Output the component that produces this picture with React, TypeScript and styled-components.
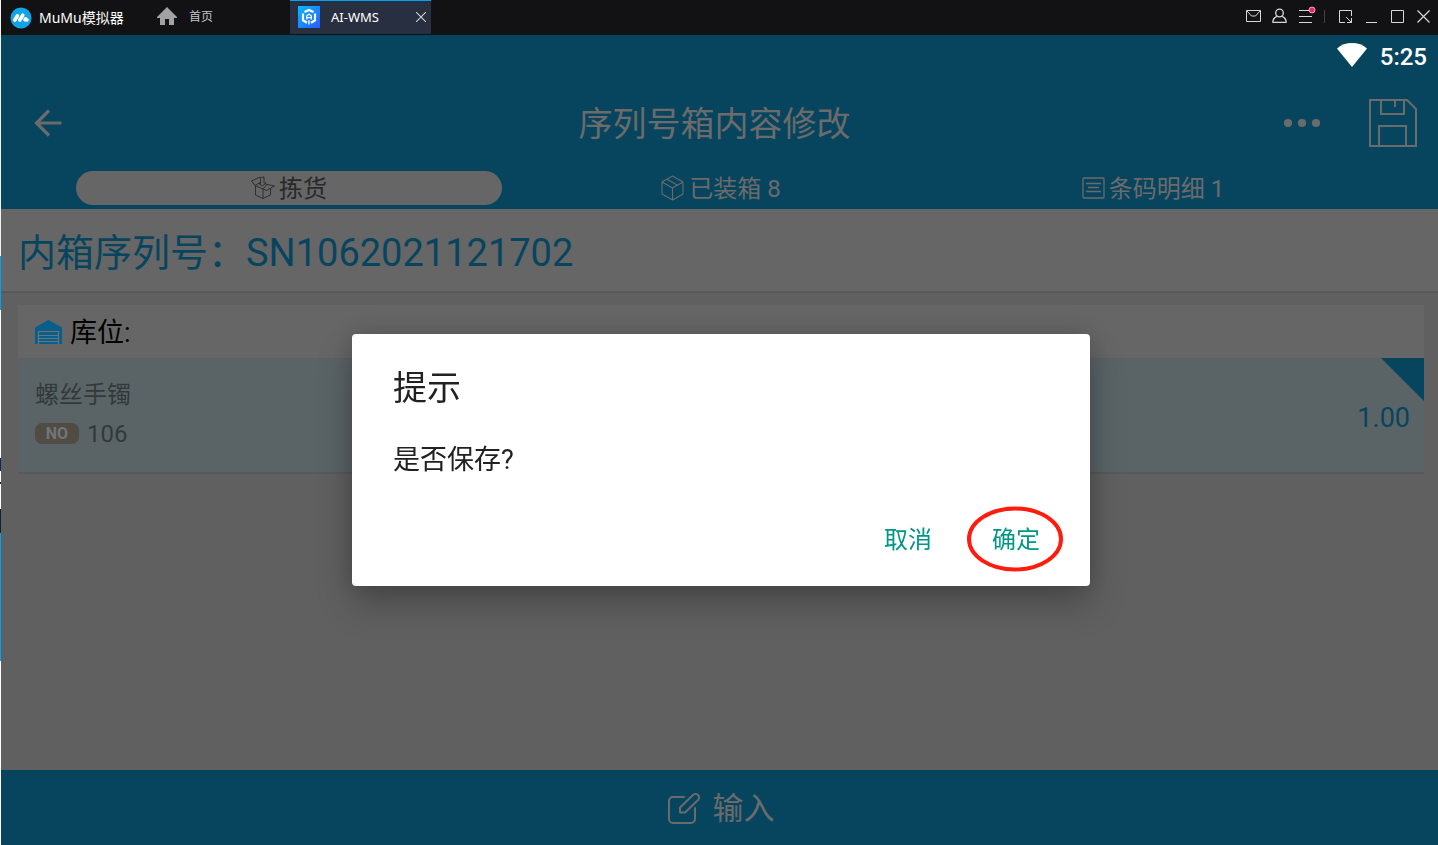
import React from "react";
import styled, { createGlobalStyle, css } from "styled-components";

const color = {
  teal: "#07455f",
  surface: "#666666",
  page: "#606060",
  muted: "#6b6b6b",
  line: "#595959",
  accent: "#009688",
  chrome: "#121214",
};

const GlobalStyle = createGlobalStyle`
  * { box-sizing: border-box; }
  html, body { margin: 0; padding: 0; }
  body {
    font-family: Roboto, "Noto Sans CJK SC", sans-serif;
    background: ${color.page};
  }
  button {
    font: inherit;
    color: inherit;
    background: none;
    border: 0;
    padding: 0;
    cursor: pointer;
  }
  h1, h2, p { margin: 0; font-weight: 400; }
  svg { display: block; flex: none; }
`;

/* The desktop behind the emulator window shows along its left edge. */
const Desktop = styled.div`
  min-height: 100vh;
  padding-left: 1px;
  display: flex;
  flex-direction: column;
  background: linear-gradient(
    to bottom,
    #f2f2f2 0 256px,
    #00a2f2 256px 310px,
    #ffffff 310px 458px,
    #0a2a5c 458px 471px,
    #ffffff 471px 482px,
    #222222 482px 484px,
    #ffffff 484px 509px,
    #14202a 509px 533px,
    #00a2f2 533px 661px,
    #ffffff 661px
  );
`;

const TitleBar = styled.header`
  height: 35px;
  display: flex;
  align-items: center;
  justify-content: space-between;
  padding: 0 6px 0 9px;
  background: ${color.chrome};
  color: #ffffff;
  font-family: "Noto Sans", "Noto Sans CJK SC", sans-serif;
`;

const TitleGroup = styled.div`
  display: flex;
  align-items: center;
  height: 100%;
`;

const Brand = styled.div`
  display: flex;
  align-items: center;
  gap: 7px;
  width: 147px;
  height: 34px;
  font-size: 14px;
  line-height: 20px;
  white-space: nowrap;
`;

const HomeButton = styled.button`
  display: flex;
  align-items: center;
  gap: 12px;
  width: 133px;
  height: 34px;
  padding-bottom: 4px;
  color: #c4c4c4;
  font-size: 12px;
`;

const AppTab = styled.div`
  display: flex;
  align-items: center;
  align-self: flex-start;
  width: 141px;
  height: 34px;
  padding: 0 5px 2px 8px;
  border-top: 1px solid #00a2f2;
  background: #282f40;
  font-size: 13px;
`;

const AppTabName = styled.span`
  flex: 1;
  padding-left: 11px;
`;

const WindowTools = styled.div`
  display: flex;
  align-items: center;
  gap: 10px;
  height: 100%;
  padding-bottom: 3px;
  color: #d8d8d8;
`;

const ToolSeparator = styled.span`
  width: 4px;
  height: 13px;
  border-left: 1px solid #444448;
`;

const StatusBar = styled.div`
  height: 43px;
  display: flex;
  align-items: center;
  justify-content: flex-end;
  gap: 13px;
  padding: 0 11px;
  background: ${color.teal};
  color: #ffffff;
  font-size: 24px;
  font-weight: 500;
  line-height: 28px;
`;

const WifiSlot = styled.span`
  padding-bottom: 3px;
`;

const AppHeader = styled.div`
  height: 89px;
  display: grid;
  grid-template-columns: 1fr auto 1fr;
  align-items: center;
  padding: 0 21px 0 11px;
  background: ${color.teal};
  color: ${color.muted};
`;

const BackButton = styled.button`
  display: flex;
  justify-content: center;
  width: 72px;
`;

const PageTitle = styled.h1`
  padding-top: 2px;
  font-size: 34px;
  line-height: 48px;
`;

const HeaderActions = styled.div`
  display: flex;
  align-items: center;
  justify-content: flex-end;
  gap: 48px;
`;

const Tabs = styled.nav`
  height: 42px;
  display: grid;
  grid-template-columns: repeat(3, 1fr);
  gap: 6px;
  padding: 4px 72px 5px 75px;
  background: ${color.teal};
`;

const Tab = styled.button<{ $active?: boolean }>`
  display: flex;
  align-items: center;
  justify-content: center;
  gap: 4px;
  border-radius: 17px;
  color: ${color.muted};
  font-size: 24px;
  line-height: 32px;
  ${(p) =>
    p.$active &&
    css`
      background: ${color.surface};
      color: #292929;
    `}
`;

const TabLabel = styled.span`
  padding-top: 2px;
`;

const Main = styled.main`
  flex: 1;
  background: ${color.page};
`;

const SerialRow = styled.div`
  height: 84px;
  display: flex;
  align-items: center;
  padding: 5px 17px 0;
  background: ${color.surface};
  border-bottom: 2px solid ${color.line};
  color: ${color.teal};
  font-size: 38px;
  line-height: 56px;
`;

const Card = styled.section`
  margin: 12px 14px 0 17px;
  border-bottom: 2px solid ${color.line};
`;

const CardHead = styled.div`
  display: flex;
  align-items: center;
  gap: 8px;
  height: 53px;
  padding: 2px 17px 0;
  background: ${color.surface};
  color: #000000;
  font-size: 27px;
  line-height: 40px;
`;

const Item = styled.div`
  position: relative;
  display: flex;
  align-items: center;
  justify-content: space-between;
  padding: 20px 14px 22px 17px;
  border-top: 1px solid ${color.page};
  background: #5a6467;
  color: #33393b;
  font-size: 24px;
  line-height: 32px;
`;

const ItemInfo = styled.div`
  display: flex;
  flex-direction: column;
  gap: 7px;
`;

const ItemNumber = styled.div`
  display: flex;
  align-items: center;
  gap: 8px;
`;

const NumberBadge = styled.span`
  width: 44px;
  margin-bottom: 2px;
  border-radius: 7px;
  background: #504b43;
  color: #6f7779;
  font-size: 16px;
  font-weight: 700;
  line-height: 21px;
  text-align: center;
`;

const Quantity = styled.span`
  padding-top: 6px;
  color: ${color.teal};
  font-size: 27px;
`;

const CornerFlag = styled.span`
  position: absolute;
  top: -1px;
  right: 0;
  width: 43px;
  height: 43px;
  background: ${color.teal};
  clip-path: polygon(0 0, 100% 0, 100% 100%);
`;

const InputBar = styled.button`
  display: flex;
  align-items: center;
  justify-content: center;
  gap: 13px;
  height: 75px;
  width: 100%;
  padding: 2px 0 0 3px;
  color: ${color.muted};
  font-size: 31px;
  line-height: 44px;
`;

const Footer = styled.footer`
  background: ${color.teal};
`;

const Overlay = styled.div`
  position: fixed;
  inset: 0;
  display: flex;
  align-items: center;
  justify-content: center;
  padding: 75px 0 0 4px;
`;

const Dialog = styled.div`
  width: 738px;
  max-width: 90%;
  padding: 34px 34px 22px 41px;
  border-radius: 4px;
  background: #ffffff;
  color: #212121;
  box-shadow: 0 18px 36px rgba(0, 0, 0, 0.24), 0 0 24px rgba(0, 0, 0, 0.16);
`;

const DialogTitle = styled.h2`
  font-size: 34px;
  line-height: 40px;
`;

const DialogText = styled.p`
  margin-top: 36px;
  font-size: 27px;
  line-height: 32px;
`;

const DialogActions = styled.div`
  display: flex;
  justify-content: flex-end;
  gap: 28px;
  margin-top: 40px;
`;

const DialogButton = styled.button`
  position: relative;
  height: 48px;
  padding: 0 16px;
  color: ${color.accent};
  font-size: 24px;
  line-height: 48px;
`;

const Highlight = styled.svg`
  position: absolute;
  top: -10px;
  left: -9px;
  pointer-events: none;
`;

const BrandLogo = () => (
  <svg width="22" height="22" viewBox="0 0 22 22">
    <circle cx="11" cy="11" r="10.5" fill="#12a4e8" />
    <g stroke="#fff" strokeWidth="3.6" strokeLinecap="round">
      <path d="M4.8 13 7.400 8.800" />
      <path d="M9.800 13 12.800 8.200" />
      <path d="M15 12.800 15.600 11.800" />
    </g>
    <circle cx="17" cy="13" r="1.700" fill="#fff" />
  </svg>
);

const HomeIcon = () => (
  <svg width="20" height="18" viewBox="0 0 20 18" fill="#a2a2a2">
    <path d="M10 0 20 10v1h-3v7h-5v-6H8v6H3v-7H0v-1z" />
  </svg>
);

const AppLogo = () => (
  <svg width="22" height="22" viewBox="0 0 22 22" fill="none">
    <defs>
      <linearGradient id="appLogo" x1="0" y1="0" x2="1" y2="1">
        <stop offset="0" stopColor="#05b9ff" />
        <stop offset="1" stopColor="#2a5cff" />
      </linearGradient>
    </defs>
    <rect width="22" height="22" fill="url(#appLogo)" />
    <g stroke="#fff" strokeWidth="2.200">
      <path d="M6.500 6 11 3.900 15.500 6" />
      <path d="M5 7.500v6.800l4 2.500" />
      <path d="M17 7.500v6.800l-4 2.500" />
      <path d="M8.700 13.500V10L11 8l2.300 2v3.500M8.700 11.600h4.600" strokeWidth="1.300" />
      <path d="M11 14v4.500" strokeWidth="1.300" />
    </g>
  </svg>
);

const Line = styled.svg.attrs({
  width: 16,
  height: 16,
  viewBox: "0 0 16 16",
  fill: "none",
  stroke: "currentColor",
})``;

const windowTools = [
  {
    label: "消息",
    icon: (
      <Line>
        <path d="M.5 2.500h14v11H.5z" />
        <path d="m1 3 4.500 5h4L14 3" />
      </Line>
    ),
  },
  {
    label: "账户",
    icon: (
      <Line strokeWidth={1.3}>
        <circle cx="7.500" cy="5" r="3.800" />
        <path d="M.8 14.400c0-3 1.700-5 4-6M14.200 14.400c0-3-1.700-5-4-6M.5 14.400h14" />
      </Line>
    ),
  },
  {
    label: "菜单",
    icon: (
      <Line overflow="visible">
        <path d="M1 2.500h10M1 8.500h13M1 14.500h13" />
        <circle cx="14" cy="2" r="3" fill="#ff1f66" stroke="#fff" strokeWidth=".6" />
      </Line>
    ),
  },
];

const windowControls = [
  {
    label: "小窗",
    icon: (
      <Line>
        <path d="M7 14.500H1.500v-12h12V8M8 9l5.500 5.500M13.500 10v4.500H9" />
      </Line>
    ),
  },
  {
    label: "最小化",
    icon: (
      <Line>
        <path d="M2 14.500h11" />
      </Line>
    ),
  },
  {
    label: "最大化",
    icon: (
      <Line>
        <path d="M1.500 2.500h12v12h-12z" />
      </Line>
    ),
  },
  {
    label: "关闭",
    icon: (
      <Line strokeWidth={1.2}>
        <path d="m1.500 2.500 12 12M13.500 2.500l-12 12" />
      </Line>
    ),
  },
];

const CloseIcon = () => (
  <svg width="10" height="10" viewBox="0 0 10 10" stroke="#d0d0d0" strokeWidth="1.100">
    <path d="m0 0 10 10M10 0 0 10" />
  </svg>
);

const WifiIcon = () => (
  <svg width="30" height="24" viewBox="0 0 30 24" fill="#fff">
    <path d="M0 5.500C8-1.800 22-1.800 30 5.500L15 24z" />
  </svg>
);

const BackIcon = () => (
  <svg width="28" height="28" viewBox="0 0 28 28" fill="none" stroke="currentColor" strokeWidth="3.200">
    <path d="M15 1.500 2.500 14 15 26.500M2 14h25.500" />
  </svg>
);

const MoreIcon = () => (
  <svg width="38" height="10" viewBox="0 0 38 10" fill="currentColor">
    <circle cx="5" cy="5" r="4.100" />
    <circle cx="19" cy="5" r="4.100" />
    <circle cx="33" cy="5" r="4.100" />
  </svg>
);

const SaveIcon = () => (
  <svg width="48" height="50" viewBox="0 0 48 50" fill="none" stroke="currentColor" strokeWidth="2">
    <path d="M1 2h37l9 9v37H1z" />
    <path d="M12 2v14h23V2M26 2v7M10 48V28h27v20" />
  </svg>
);

const OpenBoxIcon = () => (
  <svg width="24" height="24" viewBox="0 0 24 24" fill="none" stroke="currentColor" strokeWidth=".9" strokeLinejoin="round">
    <path d="M4 9.500 12 13v9.500l-7.500-3.500V10M12 22.500l7.500-3.500v-7" />
    <path d="M4 9.500.5 5 8 1.500h1M4 9.500 10 6M12 13l3.500 1.500L23.500 10 16 8.500 12 13M16 8.500 14 7.500" />
    <path d="M9.500 1.500v6H7.800l4 2.500 3-3H13v-6z" />
  </svg>
);

const BoxIcon = () => (
  <svg width="24" height="26" viewBox="0 0 24 26" fill="none" stroke="currentColor" strokeWidth="1.100" strokeLinejoin="round">
    <path d="M11.500 1 22 7v12l-10.500 6L1 19V7zM1 7l10.500 6L22 7M11.500 13v12M6 4.300l10.500 6" />
  </svg>
);

const ListIcon = () => (
  <svg width="23" height="22" viewBox="0 0 23 22" fill="none" stroke="currentColor" strokeWidth="1.300">
    <rect x="1" y="1" width="21" height="20" rx="1" />
    <path d="M4 6.500h15M6 10.500h11M4 14.500h15" />
  </svg>
);

const WarehouseIcon = () => (
  <svg width="27" height="25" viewBox="0 0 27 25">
    <path d="M0 7.500 13.500 0 27 7.500V24H0z" fill="#08608a" />
    <path d="M3.500 24V11.500h20V24M4 15.500h19M4 18.500h19M4 21.500h19" fill="none" stroke="#6c7478" strokeWidth="1.200" />
  </svg>
);

const EditIcon = () => (
  <svg width="32" height="32" viewBox="0 0 32 32" fill="none" stroke="currentColor" strokeWidth="2" strokeLinejoin="round">
    <path d="M16 4H5a4 4 0 0 0-4 4v18a4 4 0 0 0 4 4h18a4 4 0 0 0 4-4V15" strokeLinecap="round" />
    <path d="M12 19.500v-5L25 2a3.500 3.500 0 0 1 5 5L17 19.500z" />
  </svg>
);

export default function App() {
  return (
    <>
      <GlobalStyle />
      <Desktop>
        <TitleBar>
          <TitleGroup>
            <Brand>
              <BrandLogo />
              MuMu模拟器
            </Brand>
            <HomeButton>
              <HomeIcon />
              首页
            </HomeButton>
            <AppTab>
              <AppLogo />
              <AppTabName>AI-WMS</AppTabName>
              <button aria-label="关闭标签">
                <CloseIcon />
              </button>
            </AppTab>
          </TitleGroup>
          <WindowTools>
            {windowTools.map((t) => (
              <button key={t.label} aria-label={t.label}>
                {t.icon}
              </button>
            ))}
            <ToolSeparator />
            {windowControls.map((t) => (
              <button key={t.label} aria-label={t.label}>
                {t.icon}
              </button>
            ))}
          </WindowTools>
        </TitleBar>

        <StatusBar>
          <WifiSlot>
            <WifiIcon />
          </WifiSlot>
          <span>5:25</span>
        </StatusBar>

        <AppHeader>
          <BackButton aria-label="返回">
            <BackIcon />
          </BackButton>
          <PageTitle>序列号箱内容修改</PageTitle>
          <HeaderActions>
            <button aria-label="更多">
              <MoreIcon />
            </button>
            <button aria-label="保存">
              <SaveIcon />
            </button>
          </HeaderActions>
        </AppHeader>

        <Tabs>
          <Tab $active>
            <OpenBoxIcon />
            <TabLabel>拣货</TabLabel>
          </Tab>
          <Tab>
            <BoxIcon />
            <TabLabel>已装箱 8</TabLabel>
          </Tab>
          <Tab>
            <ListIcon />
            <TabLabel>条码明细 1</TabLabel>
          </Tab>
        </Tabs>

        <Main>
          <SerialRow>内箱序列号：SN1062021121702</SerialRow>
          <Card>
            <CardHead>
              <WarehouseIcon />
              库位:
            </CardHead>
            <Item>
              <ItemInfo>
                <span>螺丝手镯</span>
                <ItemNumber>
                  <NumberBadge>NO</NumberBadge>
                  106
                </ItemNumber>
              </ItemInfo>
              <Quantity>1.00</Quantity>
              <CornerFlag />
            </Item>
          </Card>
        </Main>

        <Footer>
          <InputBar>
            <EditIcon />
            输入
          </InputBar>
        </Footer>
      </Desktop>

      <Overlay>
        <Dialog role="dialog" aria-modal="true" aria-labelledby="dialog-title">
          <DialogTitle id="dialog-title">提示</DialogTitle>
          <DialogText>是否保存?</DialogText>
          <DialogActions>
            <DialogButton>取消</DialogButton>
            <DialogButton>
              确定
              <Highlight width="96" height="66" viewBox="0 0 96 66" fill="none">
                <ellipse cx="48" cy="33" rx="46" ry="30.500" stroke="#ff1c0f" strokeWidth="4" />
              </Highlight>
            </DialogButton>
          </DialogActions>
        </Dialog>
      </Overlay>
    </>
  );
}
